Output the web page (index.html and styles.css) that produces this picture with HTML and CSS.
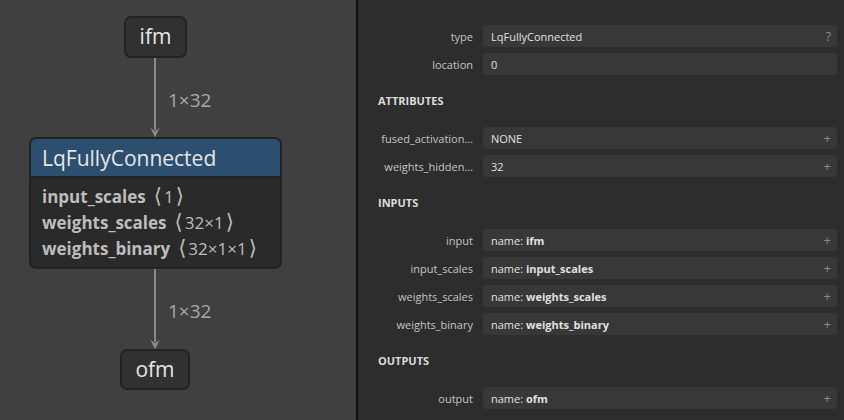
FILE: index.html
```html
<!DOCTYPE html>
<html>
<head>
<meta charset="utf-8">
<link rel="stylesheet" href="styles.css">
</head>
<body>
<div class="app">
  <div class="canvas">
    <svg class="edges" width="356" height="420" viewBox="0 0 356 420">
      <line x1="155" y1="57" x2="155" y2="130" class="edge"/>
      <path d="M150.5 128 L155 137.5 L159.5 128 L155 131 Z" class="head"/>
      <line x1="155" y1="268" x2="155" y2="342" class="edge"/>
      <path d="M150.5 340 L155 349.5 L159.5 340 L155 343 Z" class="head"/>
    </svg>
    <div class="node io n-ifm">ifm</div>
    <div class="elabel l1">1×32</div>
    <div class="node op n-op">
      <div class="op-head">LqFullyConnected</div>
      <div class="op-body">
        <div class="arg"><b>input_scales</b><span class="shp"><span class="br bl">⟨</span>1<span class="br brr">⟩</span></span></div>
        <div class="arg"><b>weights_scales</b><span class="shp"><span class="br bl">⟨</span>32×1<span class="br brr">⟩</span></span></div>
        <div class="arg"><b>weights_binary</b><span class="shp"><span class="br bl">⟨</span>32×1×1<span class="br brr">⟩</span></span></div>
      </div>
    </div>
    <div class="elabel l2">1×32</div>
    <div class="node io n-ofm">ofm</div>
  </div>
  <div class="sidebar">
    <div class="row"><div class="lbl">type</div><div class="fld"><span>LqFullyConnected</span><span class="btn">?</span></div></div>
    <div class="row"><div class="lbl">location</div><div class="fld"><span>0</span></div></div>
    <div class="hdr">ATTRIBUTES</div>
    <div class="row"><div class="lbl">fused_activation…</div><div class="fld"><span>NONE</span><span class="btn">+</span></div></div>
    <div class="row"><div class="lbl">weights_hidden…</div><div class="fld"><span>32</span><span class="btn">+</span></div></div>
    <div class="hdr">INPUTS</div>
    <div class="row"><div class="lbl">input</div><div class="fld"><span>name: <b>ifm</b></span><span class="btn">+</span></div></div>
    <div class="row"><div class="lbl">input_scales</div><div class="fld"><span>name: <b>input_scales</b></span><span class="btn">+</span></div></div>
    <div class="row"><div class="lbl">weights_scales</div><div class="fld"><span>name: <b>weights_scales</b></span><span class="btn">+</span></div></div>
    <div class="row"><div class="lbl">weights_binary</div><div class="fld"><span>name: <b>weights_binary</b></span><span class="btn">+</span></div></div>
    <div class="hdr">OUTPUTS</div>
    <div class="row"><div class="lbl">output</div><div class="fld"><span>name: <b>ofm</b></span><span class="btn">+</span></div></div>
  </div>
</div>
</body>
</html>
```
FILE: styles.css
```css
* { box-sizing: border-box; }
html, body { margin: 0; padding: 0; background: #2d2d2d; }
body { font-family: "Open Sans", "Noto Sans", sans-serif; }
.app { display: flex; width: 844px; height: 420px; overflow: hidden; }
.canvas { position: relative; width: 356px; height: 420px; background: #404040; flex: none; }
.edges { position: absolute; left: 0; top: 0; }
.edge { stroke: #8a8a8a; stroke-width: 2; }
.head { fill: #8a8a8a; }
.node { position: absolute; border: 2px solid #232323; border-radius: 7px; color: #e6e6e6; }
.io { background: #313131; font-size: 21px; line-height: 36px; text-align: center; }
.n-ifm { left: 124px; top: 16px; width: 63px; height: 42px; }
.n-ofm { left: 120px; top: 349px; width: 70px; height: 41px; }
.elabel { position: absolute; font-size: 19px; color: #a8a8a8; line-height: 20px; }
.l1 { left: 168px; top: 90px; }
.l2 { left: 168px; top: 301px; }
.n-op { left: 29px; top: 137px; width: 253px; height: 132px; overflow: hidden; background: #2a2a2a; }
.op-head { background: #2d4f6f; height: 39px; border-bottom: 2px solid #232323; padding-left: 11px; font-size: 21px; line-height: 39px; color: #e6e6e6; white-space: nowrap; }
.op-body { padding: 6px 11px 0; }
.arg { font-size: 17px; line-height: 26px; height: 26px; color: #bdbdbd; white-space: nowrap; }
.arg b { font-weight: 700; }
.shp { margin-left: 8px; }
.br { font-family: "DejaVu Sans", sans-serif; font-size: 21px; line-height: 0; }
.bl { padding-right: 2px; }
.brr { padding-left: 2px; }
.sidebar { flex: 1; border-left: 2px solid #111; background: #2d2d2d; padding: 25px 7px 0 20px; display: flex; flex-direction: column; gap: 6px; }
.row { display: flex; align-items: center; gap: 10px; height: 22px; }
.lbl { width: 95px; flex: none; text-align: right; font-size: 11px; color: #c4c4c4; white-space: nowrap; }
.fld { flex: 1; height: 22px; background: #383838; border-radius: 3px; display: flex; align-items: center; justify-content: space-between; padding: 0 8px; font-size: 11px; color: #e0e0e0; }
.fld b { font-weight: 700; }
.btn { color: #8c8c8c; font-size: 13px; line-height: 22px; margin-right: -2px; }
.hdr { height: 40px; line-height: 40px; font-size: 11px; font-weight: 700; color: #dcdcdc; }
```
